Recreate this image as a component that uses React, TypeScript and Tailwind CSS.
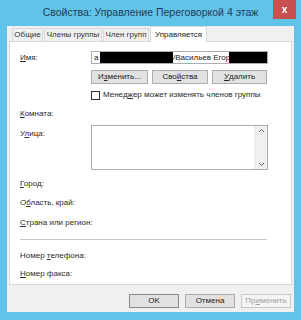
import React from "react";

const U = ({ children }: { children: React.ReactNode }) => <span className="underline underline-offset-[1px]">{children}</span>;

function Tab({ label, w, active }: { label: string; w: string; active?: boolean }) {
  if (active) {
    return (
      <div className={`${w} h-[16px] -mb-[1px] bg-white border border-[#d9d9d9] border-b-0 flex items-center justify-center text-[8px] text-[#222] relative z-10`}>
        {label}
      </div>
    );
  }
  return (
    <div className={`${w} h-[13px] bg-[#f0f0f0] border border-[#d9d9d9] border-b-0 flex items-center justify-center text-[8px] text-[#333]`}>
      {label}
    </div>
  );
}

function Btn({ children, w = "w-[50px]", disabled, def }: { children: React.ReactNode; w?: string; disabled?: boolean; def?: boolean }) {
  return (
    <div
      className={`${w} h-[14px] flex items-center justify-center text-[8px] border ${
        disabled
          ? "bg-[#f4f4f4] border-[#c8c8c8] text-[#a0a0a0]"
          : def
          ? "bg-[#e1e1e1] border-[#8a8a8a] text-[#222]"
          : "bg-[#e1e1e1] border-[#adadad] text-[#222]"
      }`}
    >
      {children}
    </div>
  );
}

function Label({ children, className = "" }: { children: React.ReactNode; className?: string }) {
  return <div className={`h-[10px] leading-[10px] text-[8px] text-[#2a2a2a] ${className}`}>{children}</div>;
}

export default function App() {
  return (
    <div
      className="w-[301px] h-[320px] bg-[#62c3e9] flex flex-col overflow-hidden"
      style={{ fontFamily: '"Liberation Sans", Arial, sans-serif' }}
    >
      {/* Title bar */}
      <div className="h-[26px] relative flex items-center justify-center">
        <div className="text-[10.5px] text-[#1d3d56] whitespace-nowrap">Свойства: Управление Переговоркой 4 этаж</div>
        <div className="absolute top-0 right-[5px] w-[23px] h-[19px] bg-[#c75050] flex items-center justify-center text-white text-[10px] font-bold leading-none">
          x
        </div>
      </div>

      {/* Body */}
      <div className="flex-1 mx-[7px] mb-[8px] bg-[#f0f0f0] flex flex-col px-[2px]">
        {/* Tabs */}
        <div className="h-[14px] flex items-end pl-[3px] gap-[1px] mt-[1px]">
          <Tab label="Общие" w="w-[31px]" />
          <Tab label="Члены группы" w="w-[58px]" />
          <Tab label="Член групп" w="w-[46px]" />
          <Tab label="Управляется" w="w-[57px]" active />
        </div>

        {/* Panel */}
        <div className="h-[244px] bg-white border border-[#d9d9d9] flex flex-col pl-[10px]">
          {/* Name */}
          <div className="mt-[9px] h-[13px] flex items-center">
            <Label className="w-[71px]"><U>И</U>мя:</Label>
            <div className="w-[177px] h-[13px] border border-[#abadb3] flex items-center text-[8px] text-[#222] bg-white">
              <span className="pl-[2px] w-[8px]">a</span>
              <div className="w-[73px] h-[11px] bg-black" />
              <span className="w-[56px] whitespace-nowrap overflow-hidden">/Васильев Егор</span>
              <div className="w-[38px] h-[11px] bg-black" />
            </div>
          </div>
          {/* Buttons */}
          <div className="mt-[6px] h-[13px] flex items-center pl-[71px] gap-[4px]">
            <Btn w="w-[57px]">И<U>з</U>менить...</Btn>
            <Btn w="w-[56px]">Сво<U>й</U>ства</Btn>
            <Btn w="w-[55px]"><U>У</U>далить</Btn>
          </div>
          {/* Checkbox */}
          <div className="mt-[7px] h-[10px] flex items-center pl-[71px] gap-[3px]">
            <div className="w-[9px] h-[9px] border border-[#333] bg-white" />
            <Label>Менед<U>ж</U>ер может изменять членов группы</Label>
          </div>
          {/* Комната */}
          <div className="mt-[9px] flex">
            <Label><U>К</U>омната:</Label>
          </div>
          {/* Улица */}
          <div className="mt-[6px] flex">
            <Label className="w-[71px] mt-[4px]">У<U>л</U>ица:</Label>
            <div className="w-[177px] h-[45px] border border-[#abadb3] flex justify-end">
              <div className="w-[13px] h-full bg-[#f0f0f0] border-l border-[#e8e8e8] flex flex-col justify-between items-center py-[2px]">
                <svg width="7" height="5" viewBox="0 0 7 5"><path d="M1 4 L3.5 1.5 L6 4" fill="none" stroke="#606060" strokeWidth="1" /></svg>
                <svg width="7" height="5" viewBox="0 0 7 5"><path d="M1 1 L3.5 3.5 L6 1" fill="none" stroke="#606060" strokeWidth="1" /></svg>
              </div>
            </div>
          </div>
          <div className="mt-[9px]"><Label><U>Г</U>ород:</Label></div>
          <div className="mt-[9px]"><Label>О<U>б</U>ласть, край:</Label></div>
          <div className="mt-[10px]"><Label><U>С</U>трана или регион:</Label></div>
          <div className="mt-[11px] w-[247px] h-[1px] bg-[#c8c8c8]" />
          <div className="mt-[11px]"><Label>Номер <U>т</U>елефона:</Label></div>
          <div className="mt-[8px]"><Label><U>Н</U>омер факса:</Label></div>
        </div>

        {/* Bottom buttons */}
        <div className="mt-[9px] flex justify-end gap-[6px] pr-[1px]">
          <Btn def>OK</Btn>
          <Btn>Отмена</Btn>
          <Btn disabled>Пр<U>и</U>менить</Btn>
        </div>
      </div>
    </div>
  );
}
